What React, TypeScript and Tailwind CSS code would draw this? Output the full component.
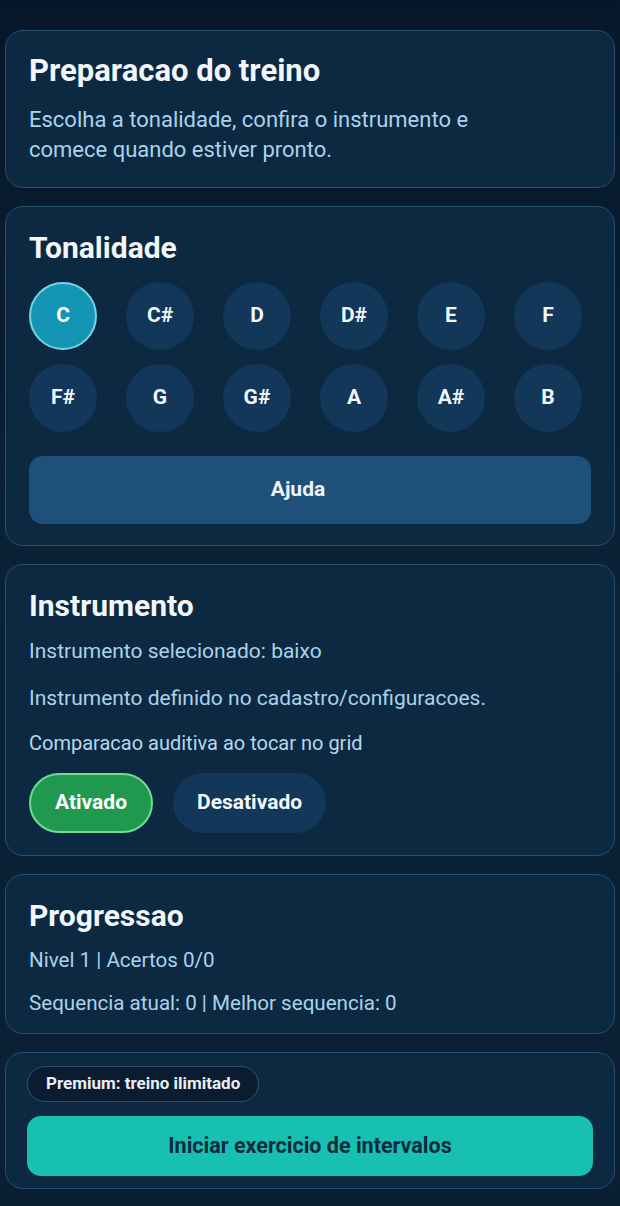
import { useState } from "react";

const keys = ["C", "C#", "D", "D#", "E", "F", "F#", "G", "G#", "A", "A#", "B"];

function Card({ className = "", children }: { className?: string; children: React.ReactNode }) {
  return (
    <section className={`rounded-[18px] border border-[#25506f] bg-[#0d2941] ${className}`}>
      {children}
    </section>
  );
}

function Heading({ className = "text-[30px]", children }: { className?: string; children: React.ReactNode }) {
  return <h2 className={`${className} leading-[35px] font-bold text-[#f1f6fa]`}>{children}</h2>;
}

export default function App() {
  const [tonic, setTonic] = useState("C");
  const [compare, setCompare] = useState(true);

  return (
    <div
      className="min-h-screen bg-gradient-to-b from-[#07172a] via-[#0b2237] to-[#0a1f33] px-[5px] pt-[30px] pb-4 flex flex-col gap-[18px]"
      style={{ fontFamily: "Roboto, 'Noto Sans', sans-serif" }}
    >
      <Card className="px-[23px] pt-[22px] pb-[22px]">
        <Heading className="text-[31px]">Preparacao do treino</Heading>
        <p className="mt-[17px] max-w-[460px] text-[22px] leading-[30px] text-[#a9d3ec]">
          Escolha a tonalidade, confira o instrumento e comece quando estiver pronto.
        </p>
      </Card>

      <Card className="px-[23px] pt-[23px] pb-[21px]">
        <Heading>Tonalidade</Heading>
        <div className="mt-[17px] flex flex-wrap gap-x-[29px] gap-y-[14px]">
          {keys.map((k) => (
            <button
              key={k}
              onClick={() => setTonic(k)}
              className={
                k === tonic
                  ? "w-[68px] h-[68px] rounded-full bg-[#1495b4] border-2 border-[#78d4e4] text-white text-[21px] font-bold"
                  : "w-[68px] h-[68px] rounded-full bg-[#123758] text-[#f1f6fa] text-[21px] font-bold"
              }
            >
              {k}
            </button>
          ))}
        </div>
        <button className="mt-6 w-full h-[68px] pr-6 rounded-[14px] bg-[#1f5079] text-[#eef4f9] text-[21px] font-bold">
          Ajuda
        </button>
      </Card>

      <Card className="px-[23px] pt-[23px] pb-[22px]">
        <Heading>Instrumento</Heading>
        <p className="mt-[13px] text-[21px] leading-[30px] text-[#a9d3ec]">Instrumento selecionado: baixo</p>
        <p className="mt-[17px] text-[21px] leading-[30px] text-[#a9d3ec]">
          Instrumento definido no cadastro/configuracoes.
        </p>
        <p className="mt-[17px] text-[20px] leading-[27px] text-[#b5d8ee]">
          Comparacao auditiva ao tocar no grid
        </p>
        <div className="mt-4 flex gap-5">
          <button
            onClick={() => setCompare(true)}
            className={
              compare
                ? "h-[60px] px-[24px] rounded-full bg-[#20994f] border-2 border-[#6fdc96] text-white text-[21px] font-bold"
                : "h-[60px] px-[24px] rounded-full bg-[#123758] text-[#f1f6fa] text-[21px] font-bold"
            }
          >
            Ativado
          </button>
          <button
            onClick={() => setCompare(false)}
            className={
              !compare
                ? "h-[60px] px-[24px] rounded-full bg-[#20994f] border-2 border-[#6fdc96] text-white text-[21px] font-bold"
                : "h-[60px] px-[24px] rounded-full bg-[#123758] text-[#f1f6fa] text-[21px] font-bold"
            }
          >
            Desativado
          </button>
        </div>
      </Card>

      <Card className="px-[23px] pt-[23px] pb-[15px]">
        <Heading>Progressao</Heading>
        <p className="mt-3 text-[20.6px] leading-[30px] text-[#a9d3ec]">Nivel 1 | Acertos 0/0</p>
        <p className="mt-[13px] text-[20.6px] leading-[30px] text-[#a9d3ec]">
          Sequencia atual: 0 | Melhor sequencia: 0
        </p>
      </Card>

      <Card className="px-[21px] pt-[13px] pb-[12px]">
        <span className="inline-flex items-center h-[36px] px-[18px] rounded-full border border-[#2d5271] bg-[#0b1c30] text-[17px] font-bold text-[#e8eff5]">
          Premium: treino ilimitado
        </span>
        <button className="mt-[14px] w-full h-[60px] rounded-[14px] bg-[#17c0b1] text-[#0c2b3d] text-[21.5px] font-bold">
          Iniciar exercicio de intervalos
        </button>
      </Card>
    </div>
  );
}
